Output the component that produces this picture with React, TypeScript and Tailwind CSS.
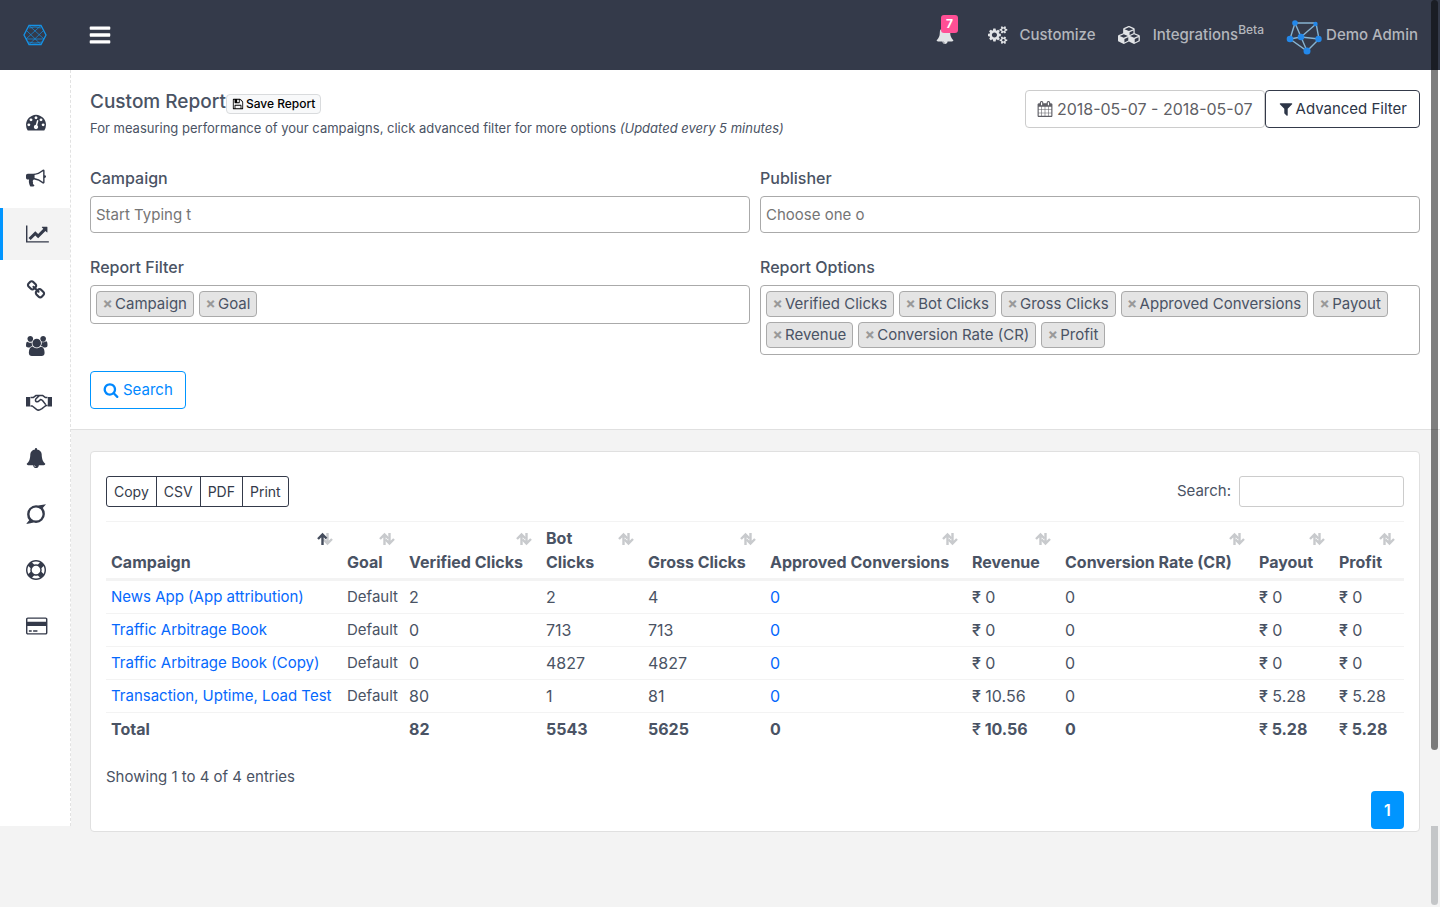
type IconDef = { w: number; d: string };

const icons: Record<string, IconDef> = {
  tachometer: { w: 1792, d: 'M384 1152q0-53-37.5-90.5t-90.5-37.5-90.5 37.5-37.5 90.5 37.5 90.5 90.5 37.5 90.5-37.5 37.5-90.5zm192-448q0-53-37.5-90.5t-90.5-37.5-90.5 37.5-37.5 90.5 37.5 90.5 90.5 37.5 90.5-37.5 37.5-90.5zm428 481l101-382q6-26-7.5-48.5t-38.5-29.5-48 6.5-30 39.5l-101 382q-60 5-107 43.5t-63 98.5q-20 77 20 146t117 89 146-20 89-117q16-60-6-117t-72-91zm660-33q0-53-37.5-90.5t-90.5-37.5-90.5 37.5-37.5 90.5 37.5 90.5 90.5 37.5 90.5-37.5 37.5-90.5zm-640-640q0-53-37.5-90.5t-90.5-37.5-90.5 37.5-37.5 90.5 37.5 90.5 90.5 37.5 90.5-37.5 37.5-90.5zm448 192q0-53-37.5-90.5t-90.5-37.5-90.5 37.5-37.5 90.5 37.5 90.5 90.5 37.5 90.5-37.5 37.5-90.5zm320 448q0 261-141 483-19 29-54 29h-1402q-35 0-54-29-141-221-141-483 0-182 71-348t191-286 286-191 348-71 348 71 286 191 191 286 71 348z' },
  bullhorn: { w: 1792, d: 'M1664 640q53 0 90.5 37.5t37.5 90.5-37.5 90.5-90.5 37.5v384q0 52-38 90t-90 38q-417-347-812-380-58 19-91 66t-31 100.5 40 92.5q-20 33-23 65.5t6 58 33.5 55 48 50 61.5 50.5q-29 58-111.5 83t-168.5 11.5-132-55.5q-7-23-29.5-87.5t-32-94.5-23-89-15-101 3.5-98.5 22-110.5h-122q-66 0-113-47t-47-113v-192q0-66 47-113t113-47h480q435 0 896-384 52 0 90 38t38 90v384zm-128 604v-954q-394 302-768 343v270q377 42 768 341z' },
  chart: { w: 2048, d: 'M2048 1536v128h-2048v-1536h128v1408h1920zm-128-1248v435q0 21-19.5 29.5t-35.5-7.5l-121-121-633 633q-10 10-23 10t-23-10l-233-233-416 416-192-192 585-585q10-10 23-10t23 10l233 233 464-464-121-121q-16-16-7.5-35.5t29.5-19.5h435q14 0 23 9t9 23z' },
  chain: { w: 1792, d: 'M1520 1216q0-40-28-68l-208-208q-28-28-68-28-42 0-72 32 3 3 19 18.5t21.5 21.5 15 19 13 25.5 3.5 27.5q0 40-28 68t-68 28q-15 0-27.5-3.5t-25.5-13-19-15-21.5-21.5-18.5-19q-33 31-33 73 0 40 28 68l206 207q27 27 68 27 40 0 68-26l147-146q28-28 28-67zm-703-705q0-40-28-68l-206-207q-28-28-68-28-39 0-68 27l-147 146q-28 28-28 67 0 40 28 68l208 208q27 27 68 27 42 0 72-31-3-3-19-18.5t-21.5-21.5-15-19-13-25.5-3.5-27.5q0-40 28-68t68-28q15 0 27.5 3.5t25.5 13 19 15 21.5 21.5 18.5 19q33-31 33-73zm895 705q0 120-85 203l-147 146q-83 83-203 83-121 0-204-85l-206-207q-83-83-83-203 0-123 88-209l-88-88q-86 88-208 88-120 0-204-84l-208-208q-84-84-84-204t85-203l147-146q83-83 203-83 121 0 204 85l206 207q83 83 83 203 0 123-88 209l88 88q86-88 208-88 120 0 204 84l208 208q84 84 84 204z' },
  users: { w: 1920, d: 'M593 896q-162 5-265 128h-134q-82 0-138-40.5t-56-118.5q0-353 124-353 6 0 43.5 21t97.5 42.5 119 21.5q67 0 133-23-5 37-5 66 0 159 90 296zm1071 637q0 120-73 189.5t-194 69.5h-874q-121 0-194-69.5t-73-189.5q0-53 3.5-103.5t14-109 26.5-108.5 43-97.5 62-81 85.5-53.5 111.5-20q10 0 43 21.5t73 48 107 48 135 21.5 135-21.5 107-48 73-48 43-21.5q61 0 111.5 20t85.5 53.5 62 81 43 97.5 26.5 108.5 14 109 3.5 103.5zm-1024-1277q0 106-75 181t-181 75-181-75-75-181 75-181 181-75 181 75 75 181zm704 384q0 159-112.5 271.5t-271.5 112.5-271.5-112.5-112.5-271.5 112.5-271.5 271.5-112.5 271.5 112.5 112.5 271.5zm576 225q0 78-56 118.5t-138 40.5h-134q-103-123-265-128 90-137 90-296 0-29-5-66 66 23 133 23 59 0 119-21.5t97.5-42.5 43.5-21q124 0 124 353zm-128-609q0 106-75 181t-181 75-181-75-75-181 75-181 181-75 181 75 75 181z' },
  bell: { w: 1792, d: 'M912 1696q0-16-16-16-59 0-101.5-42.5t-42.5-101.5q0-16-16-16t-16 16q0 73 51.5 124.5t124.5 51.5q16 0 16-16zm816-288q0 52-38 90t-90 38h-448q0 106-75 181t-181 75-181-75-75-181h-448q-52 0-90-38t-38-90q50-42 91-88t85-119.5 74.5-158.5 50-206 19.5-260q0-152 117-282.5t307-158.5q-8-19-8-39 0-40 28-68t68-28 68 28 28 68q0 20-8 39 190 28 307 158.5t117 282.5q0 139 19.5 260t50 206 74.5 158.5 85 119.5 91 88z' },
  orbit: { w: 1792, d: 'M1792 20l-290 330q190 220 190 546q0 330-233 563t-563 233q-100 0-190-24l-706 120l290-330q-190-220-190-546q0-330 233-563t563-233q100 0 190 24zM896 310q-243 0-414 171t-171 415 171 415 414 171 415-171 171-415-171-415-415-171z' },
  ring: { w: 1792, d: 'M896 0q182 0 348 71t286 191 191 286 71 348-71 348-191 286-286 191-348 71-348-71-286-191-191-286-71-348 71-348 191-286 286-191 348-71zm0 128q-190 0-361 90l194 194q82-28 167-28t167 28l194-194q-171-90-361-90zm-678 1129l194-194q-28-82-28-167t28-167l-194-194q-90 171-90 361t90 361zm678 407q190 0 361-90l-194-194q-82 28-167 28t-167-28l-194 194q171 90 361 90zm0-384q159 0 271.5-112.5t112.5-271.5-112.5-271.5-271.5-112.5-271.5 112.5-112.5 271.5 112.5 271.5 271.5 112.5zm484-217l194 194q90-171 90-361t-90-361l-194 194q28 82 28 167t-28 167z' },
  card: { w: 1920, d: 'M1760 128q66 0 113 47t47 113v1216q0 66-47 113t-113 47h-1600q-66 0-113-47t-47-113v-1216q0-66 47-113t113-47h1600zm-1600 128q-13 0-22.5 9.5t-9.5 22.5v224h1664v-224q0-13-9.5-22.5t-22.5-9.5h-1600zm1600 1280q13 0 22.5-9.5t9.5-22.5v-608h-1664v608q0 13 9.5 22.5t22.5 9.5h1600zm-1504-128v-128h256v128h-256zm384 0v-128h384v128h-384z' },
  floppy: { w: 1792, d: 'M512 1536h768v-384h-768v384zm896 0h128v-896q0-14-10-38.5t-20-34.5l-281-281q-10-10-34-20t-39-10v416q0 40-28 68t-68 28h-576q-40 0-68-28t-28-68v-416h-128v1280h128v-416q0-40 28-68t68-28h832q40 0 68 28t28 68v416zm-384-928v-320q0-13-9.5-22.5t-22.5-9.5h-192q-13 0-22.5 9.5t-9.5 22.5v320q0 13 9.5 22.5t22.5 9.5h192q13 0 22.5-9.5t9.5-22.5zm640 32v928q0 40-28 68t-68 28h-1344q-40 0-68-28t-28-68v-1344q0-40 28-68t68-28h928q40 0 88 20t76 48l280 280q28 28 48 76t20 88z' },
  calendar: { w: 1792, d: 'M192 1664h288v-288h-288v288zm352 0h320v-288h-320v288zm-352-352h288v-320h-288v320zm352 0h320v-320h-320v320zm-352-384h288v-288h-288v288zm736 736h320v-288h-320v288zm-384-736h320v-288h-320v288zm768 736h288v-288h-288v288zm-384-352h320v-320h-320v320zm-352-864v-288q0-13-9.5-22.5t-22.5-9.5h-64q-13 0-22.5 9.5t-9.5 22.5v288q0 13 9.5 22.5t22.5 9.5h64q13 0 22.5-9.5t9.5-22.5zm736 864h288v-320h-288v320zm-384-384h320v-288h-320v288zm384 0h288v-288h-288v288zm32-480v-288q0-13-9.5-22.5t-22.5-9.5h-64q-13 0-22.5 9.5t-9.5 22.5v288q0 13 9.5 22.5t22.5 9.5h64q13 0 22.5-9.5t9.5-22.5zm384-64v1280q0 52-38 90t-90 38h-1408q-52 0-90-38t-38-90v-1280q0-52 38-90t90-38h128v-96q0-66 47-113t113-47h64q66 0 113 47t47 113v96h384v-96q0-66 47-113t113-47h64q66 0 113 47t47 113v96h128q52 0 90 38t38 90z' },
  filter: { w: 1792, d: 'M1595 295q17 41-14 70l-493 493v742q0 42-39 59-13 5-25 5-27 0-45-19l-256-256q-19-19-19-45v-486l-493-493q-31-29-14-70 17-39 59-39h1280q42 0 59 39z' },
  search: { w: 1792, d: 'M1216 832q0-185-131.5-316.5t-316.5-131.5-316.5 131.5-131.5 316.5 131.5 316.5 316.5 131.5 316.5-131.5 131.5-316.5zm512 832q0 52-38 90t-90 38q-54 0-90-38l-343-342q-179 124-399 124-143 0-273.5-55.5t-225-150-150-225-55.5-273.5 55.5-273.5 150-225 225-150 273.5-55.5 273.5 55.5 225 150 150 225 55.5 273.5q0 220-124 399l343 343q37 37 37 90z' },
  bars: { w: 1792, d: 'M1664 1344v128q0 26-19 45t-45 19h-1408q-26 0-45-19t-19-45v-128q0-26 19-45t45-19h1408q26 0 45 19t19 45zm0-512v128q0 26-19 45t-45 19h-1408q-26 0-45-19t-19-45v-128q0-26 19-45t45-19h1408q26 0 45 19t19 45zm0-512v128q0 26-19 45t-45 19h-1408q-26 0-45-19t-19-45v-128q0-26 19-45t45-19h1408q26 0 45 19t19 45z' },
  cubes: { w: 2304, d: 'M640 1632l384-192v-314l-384 164v342zm-64-454l404-173-404-173-404 173zm1088 454l384-192v-314l-384 164v342zm-64-454l404-173-404-173-404 173zm-448-293l384-165v-266l-384 164v267zm-64-379l441-189-441-189-441 189zm1088 518v416q0 36-19 67t-52 47l-448 224q-25 14-57 14t-57-14l-448-224q-4-2-7-4-2 2-7 4l-448 224q-25 14-57 14t-57-14l-448-224q-33-16-52-47t-19-67v-416q0-38 21.5-70t56.5-48l434-186v-400q0-38 21.5-70t56.5-48l448-192q23-10 50-10t50 10l448 192q35 16 56.5 48t21.5 70v400l434 186q36 16 57 48t21 70z' },
  cogs: { w: 1920, d: 'M896 896q0-106-75-181t-181-75-181 75-75 181 75 181 181 75 181-75 75-181zm768 512q0-52-38-90t-90-38-90 38-38 90q0 53 37.5 90.5t90.5 37.5 90.5-37.5 37.5-90.5zm0-1024q0-52-38-90t-90-38-90 38-38 90q0 53 37.5 90.5t90.5 37.5 90.5-37.5 37.5-90.5zm-384 421v185q0 10-7 19.5t-16 10.5l-155 24q-11 35-32 76 34 48 90 115 7 11 7 20 0 12-7 19-23 30-82.5 89.5t-78.5 59.5q-11 0-21-7l-115-90q-37 19-77 31-11 108-23 155-7 24-30 24h-186q-11 0-20-7.5t-10-17.5l-23-153q-34-10-75-31l-118 89q-7 7-20 7-11 0-21-8-144-133-144-160 0-9 7-19 10-14 41-53t47-61q-23-44-35-82l-152-24q-10-1-17-9.5t-7-19.5v-185q0-10 7-19.5t16-10.5l155-24q11-35 32-76-34-48-90-115-7-11-7-20 0-12 7-20 22-30 82-89t79-59q11 0 21 7l115 90q34-18 77-32 11-108 23-154 7-24 30-24h186q11 0 20 7.5t10 17.5l23 153q34 10 75 31l118-89q8-7 20-7 11 0 21 8 144 133 144 160 0 8-7 19-12 16-42 54t-45 60q23 48 34 82l152 23q10 2 17 10.5t7 19.5zm640 533v140q0 16-149 31-12 27-30 52 51 113 51 138 0 4-4 7-122 71-124 71-8 0-46-47t-52-68q-20 2-30 2t-30-2q-14 21-52 68t-46 47q-2 0-124-71-4-3-4-7 0-25 51-138-18-25-30-52-149-15-149-31v-140q0-16 149-31 13-29 30-52-51-113-51-138 0-4 4-7 4-2 35-20t59-34 30-16q8 0 46 46.5t52 67.5q20-2 30-2t30 2q51-71 92-112l6-2q4 0 124 70 4 3 4 7 0 25-51 138 17 23 30 52 149 15 149 31zm0-1024v140q0 16-149 31-12 27-30 52 51 113 51 138 0 4-4 7-122 71-124 71-8 0-46-47t-52-68q-20 2-30 2t-30-2q-14 21-52 68t-46 47q-2 0-124-71-4-3-4-7 0-25 51-138-18-25-30-52-149-15-149-31v-140q0-16 149-31 13-29 30-52-51-113-51-138 0-4 4-7 4-2 35-20t59-34 30-16q8 0 46 46.5t52 67.5q20-2 30-2t30 2q51-71 92-112l6-2q4 0 124 70 4 3 4 7 0 25-51 138 17 23 30 52 149 15 149 31z' },
};

function Icon({ name, className = 'h-4' }: { name: string; className?: string }) {
  const icon = icons[name];
  return (
    <svg aria-hidden="true" viewBox={`0 0 ${icon.w} 1792`} className={`w-auto shrink-0 overflow-visible fill-current ${className}`}>
      <path fillRule={name === 'orbit' ? 'evenodd' : 'nonzero'} d={icon.d} />
    </svg>
  );
}

function Handshake() {
  return (
    <svg aria-hidden="true" viewBox="0 0 26 18" className="h-[18px] w-[26px] fill-none stroke-current" strokeWidth="1.5" strokeLinejoin="round">
      <path d="M0 4h4.200v9.600H0zM21.800 4H26v9.600h-4.200z" className="fill-current stroke-none" />
      <path d="M4.500 4.600h2.700l2.600-2h3.700M4.500 13h1.800l4.200 3.400q1.600 1.200 3.200.4l2.300-1.200 2-1.600 1.800-1.400h1.800M21.500 4.600h-2l-3-2.200h-3L9.800 6q-.9 2 .8 2.700 1.500.4 2.600-1l1.300-1.100q1.300.2 2.200 1.200l3 3.800" />
    </svg>
  );
}

function Logo() {
  return (
    <svg aria-hidden="true" viewBox="0 0 24 22" className="h-[22px] w-6 fill-none stroke-[#1592e6]">
      <path d="M6 1.5h12l5 9.5-5 9.5H6L1 11z" strokeWidth="1.3" />
      <path d="M6 1.500L21 15M18 1.500L3 15M3 15h18M3.500 6.500L18 20.500M20.500 6.500L6 20.500M6 4l6-1 6 1M5 18l7 1 7-1" strokeWidth=".8" strokeOpacity=".85" />
    </svg>
  );
}

function Avatar() {
  return (
    <svg aria-hidden="true" viewBox="0 0 36 36" className="size-9 overflow-visible">
      <path d="M9 6h21l3 16-12 12L4 22zM4 22l11-2 18 2M15 20L30 7M15 20L9 6M15 20l6 14" className="fill-none stroke-[#86b3d1]" strokeWidth="1.4" />
      <g className="fill-[#2388ea]">
        <circle cx="9" cy="6" r="2.800" /><circle cx="29.500" cy="7" r="2.200" /><circle cx="4" cy="22" r="3.300" />
        <circle cx="15" cy="20" r="3.300" /><circle cx="32.500" cy="22" r="3.200" /><circle cx="21" cy="34" r="3.500" />
      </g>
    </svg>
  );
}

const navItems = [
  { label: 'Dashboard', icon: 'tachometer' },
  { label: 'Campaigns', icon: 'bullhorn' },
  { label: 'Reports', icon: 'chart', active: true },
  { label: 'Links', icon: 'chain' },
  { label: 'Publishers', icon: 'users' },
  { label: 'Advertisers', icon: 'handshake' },
  { label: 'Notifications', icon: 'bell' },
  { label: 'Postbacks', icon: 'orbit' },
  { label: 'Support', icon: 'ring' },
  { label: 'Billing', icon: 'card' },
];

function Sidebar() {
  return (
    <nav aria-label="Main" className="flex h-[756px] w-[71px] shrink-0 flex-col gap-1 border-r border-dashed border-[#e2e2e2] bg-white pt-[26px]">
      {navItems.map((item) => (
        <a
          key={item.label}
          href="#"
          aria-label={item.label}
          className={`flex h-[52px] shrink-0 items-center border-l-[3px] pl-[23px] text-[#343a4a] ${item.active ? 'border-[#0095ff] bg-[#f3f3f3]' : 'border-transparent'}`}
        >
          {item.icon === 'handshake' ? <Handshake /> : <Icon name={item.icon} className="h-5" />}
        </a>
      ))}
    </nav>
  );
}

function Header() {
  return (
    <header className="flex h-[70px] items-center bg-[#343a4a] pr-[22px] pl-[23px] text-[15px] font-medium text-[#b3b6bc]">
      <a href="#" aria-label="Home"><Logo /></a>
      <button type="button" aria-label="Toggle menu" className="ml-[41px] text-white"><Icon name="bars" className="h-6" /></button>
      <div className="ml-auto flex items-center gap-[22px]">
        <button type="button" aria-label="7 notifications" className="relative mr-3 text-[#e1e3e6]">
          <Icon name="bell" className="h-[18px]" />
          <span className="absolute -top-[11px] left-[5px] rounded-[3px] bg-[#ff4f95] px-[5px] text-xs leading-[18px] font-bold text-white">7</span>
        </button>
        <a href="#" className="flex items-center gap-3"><span className="text-[#e1e3e6]"><Icon name="cogs" className="h-[18px]" /></span>Customize</a>
        <a href="#" className="flex items-center gap-3">
          <span className="text-[#e1e3e6]"><Icon name="cubes" className="h-[18px]" /></span>
          <span>Integrations<sup className="text-xs">Beta</sup></span>
        </a>
        <a href="#" className="flex items-center gap-1"><Avatar />Demo Admin</a>
      </div>
    </header>
  );
}

function TagBox({ id, label, tags }: { id: string; label: string; tags: string[] }) {
  return (
    <div>
      <h2 id={id} className="mb-[6px] font-medium">{label}</h2>
      <ul aria-labelledby={id} className="flex flex-wrap gap-[5px] rounded border border-[#aaa] bg-white px-[5px] pt-[5px] pb-[6px] text-[15px]">
        {tags.map((tag) => (
          <li key={tag} className="flex h-[26px] items-center gap-[2px] rounded border border-[#aaa] bg-[#e4e4e4] pr-[6px] pl-[5px]">
            <button type="button" aria-label={`Remove ${tag}`} className="w-[11px] text-center font-bold text-[#999]">×</button>
            {tag}
          </li>
        ))}
      </ul>
    </div>
  );
}

function TextField({ id, label, placeholder }: { id: string; label: string; placeholder: string }) {
  return (
    <div>
      <label htmlFor={id} className="mb-[6px] block font-medium">{label}</label>
      <input id={id} type="text" placeholder={placeholder} className="h-[37px] w-full rounded border border-[#aaa] bg-white px-[5px] text-[15px] outline-none placeholder:text-[#757575]" />
    </div>
  );
}

function SortArrows({ sorted }: { sorted?: boolean }) {
  return (
    <svg aria-hidden="true" viewBox="0 0 16 14" className="h-[14px] w-4 fill-none" strokeWidth="2.400">
      <path d="M10.500 1v10M6.500 7.500l4 4 4.500-4.500" className="stroke-[#c8cacd]" />
      <path d="M5.500 13V3M1 7l4.500-4.500 4 4" className={sorted ? 'stroke-[#454d5d]' : 'stroke-[#c8cacd]'} />
    </svg>
  );
}

const columns = [
  { name: 'Campaign', width: 'w-[236px]', sorted: true },
  { name: 'Goal', width: 'w-[62px]' },
  { name: 'Verified Clicks', width: 'w-[137px]' },
  { name: 'Bot Clicks', width: 'w-[102px]' },
  { name: 'Gross Clicks', width: 'w-[122px]' },
  { name: 'Approved Conversions', width: 'w-[202px]' },
  { name: 'Revenue', width: 'w-[93px]', money: true },
  { name: 'Conversion Rate (CR)', width: 'w-[194px]' },
  { name: 'Payout', width: 'w-[80px]', money: true },
  { name: 'Profit', width: 'w-[70px]', money: true },
];

const rows = [
  ['News App (App attribution)', 'Default', '2', '2', '4', '0', '0', '0', '0', '0'],
  ['Traffic Arbitrage Book', 'Default', '0', '713', '713', '0', '0', '0', '0', '0'],
  ['Traffic Arbitrage Book (Copy)', 'Default', '0', '4827', '4827', '0', '0', '0', '0', '0'],
  ['Transaction, Uptime, Load Test', 'Default', '80', '1', '81', '0', '10.56', '0', '5.28', '5.28'],
];
const total = ['Total', '', '82', '5543', '5625', '0', '10.56', '0', '5.28', '5.28'];

function Money({ value }: { value: string }) {
  return <><span className="font-medium">₹</span> {value}</>;
}

function ReportTable() {
  return (
    <table className="mt-[14px] w-full table-fixed border-collapse text-left">
      <thead>
        <tr className="border-t border-b-[3px] border-t-[#f3f3f3] border-b-[#f3f3f3]">
          {columns.map((column) => (
            <th key={column.name} scope="col" className={`${column.width} relative py-1 pl-[5px] align-bottom leading-6 font-bold`}>
              <span className={column.name === 'Bot Clicks' ? 'block w-14' : 'whitespace-nowrap'}>{column.name}</span>
              <span className="absolute top-[10px] right-[9px]"><SortArrows sorted={column.sorted} /></span>
            </th>
          ))}
        </tr>
      </thead>
      <tbody>
        {rows.map((row) => (
          <tr key={row[0]} className="border-b border-[#f3f3f3]">
            {row.map((cell, i) => (
              <td key={columns[i].name} className={`py-1 pl-[5px] leading-6 whitespace-nowrap ${i < 2 ? 'text-[15px]' : ''}`}>
                {i === 0 || i === 5 ? <a href="#" className="text-[#0568fd]">{cell}</a> : columns[i].money ? <Money value={cell} /> : cell}
              </td>
            ))}
          </tr>
        ))}
      </tbody>
      <tfoot>
        <tr className="font-bold">
          {total.map((cell, i) => (
            <td key={columns[i].name} className="py-1 pl-[5px] leading-6 whitespace-nowrap">{columns[i].money ? <Money value={cell} /> : cell}</td>
          ))}
        </tr>
      </tfoot>
    </table>
  );
}

export default function App() {
  return (
    <div className="relative min-h-screen bg-[#f3f3f3] font-[Inter,'Liberation_Sans',sans-serif] text-base text-[#4a5364]">
      <Header />
      <div className="flex items-start">
        <Sidebar />
        <main className="min-w-0 flex-1">
          <section className="border-b border-[#e0e0e0] bg-white pt-5 pr-5 pb-5 pl-[19px]">
            <div className="flex items-start justify-between">
              <div>
                <div className="flex items-center">
                  <h1 className="text-[19px] leading-6 font-medium">Custom Report</h1>
                  <button type="button" className="mt-1 flex h-5 items-center gap-[2px] rounded border border-[#d9dbdd] bg-[#f8f9fa] px-[5px] text-xs font-medium text-black">
                    <Icon name="floppy" className="h-3" />Save Report
                  </button>
                </div>
                <p className="mt-1 text-[13px] leading-5">For measuring performance of your campaigns, click advanced filter for more options <em>(Updated every 5 minutes)</em></p>
              </div>
              <div className="flex">
                <button type="button" className="flex h-[38px] items-center gap-1 rounded border border-[#ccc] px-[11px] text-[#5f5f66]">
                  <Icon name="calendar" />2018-05-07 - 2018-05-07
                </button>
                <button type="button" className="flex h-[38px] items-center gap-[2px] rounded border border-[#343a4a] px-3 text-[15px] text-[#2c3547]">
                  <Icon name="filter" />Advanced Filter
                </button>
              </div>
            </div>
            <form onSubmit={(event) => event.preventDefault()}>
              <div className="mt-7 grid grid-cols-2 gap-x-[10px] gap-y-[22px]">
                <TextField id="campaign" label="Campaign" placeholder="Start Typing t" />
                <TextField id="publisher" label="Publisher" placeholder="Choose one o" />
                <TagBox id="filters" label="Report Filter" tags={['Campaign', 'Goal']} />
                <TagBox id="options" label="Report Options" tags={['Verified Clicks', 'Bot Clicks', 'Gross Clicks', 'Approved Conversions', 'Payout', 'Revenue', 'Conversion Rate (CR)', 'Profit']} />
              </div>
              <button type="submit" className="mt-4 flex h-[38px] items-center gap-1 rounded border border-[#0095ff] px-3 text-[15px] text-[#0088ff]">
                <Icon name="search" />Search
              </button>
            </form>
          </section>
          <section className="mt-[21px] mr-5 ml-[19px] rounded border border-[#e0e0e0] bg-white px-[15px] pt-6 pb-[2px]">
            <div className="flex items-start justify-between">
              <div className="flex divide-x divide-[#343a4a] rounded-[3px] border border-[#343a4a] text-sm text-[#343a4a]">
                {['Copy', 'CSV', 'PDF', 'Print'].map((name) => (
                  <button key={name} type="button" className="h-[29px] px-[7px]">{name}</button>
                ))}
              </div>
              <label className="flex items-center gap-2 text-[15px]">Search:
                <input type="search" className="h-[31px] w-[165px] rounded-[3px] border border-[#ccc] bg-white px-2 text-sm outline-none" />
              </label>
            </div>
            <ReportTable />
            <p className="mt-5 text-[15px] leading-6">Showing 1 to 4 of 4 entries</p>
            <div className="mt-[2px] flex justify-end">
              <button type="button" aria-current="page" className="h-[38px] w-[33px] rounded bg-[#0095ff] font-semibold text-white">1</button>
            </div>
          </section>
        </main>
      </div>
      <div aria-hidden="true" className="absolute top-0 right-[2px] h-[750px] w-[7px] rounded-full bg-black/50" />
      <div aria-hidden="true" className="absolute right-[2px] bottom-[2px] h-[79px] w-[7px] rounded-b-full bg-[#c4c6c8]" />
    </div>
  );
}
